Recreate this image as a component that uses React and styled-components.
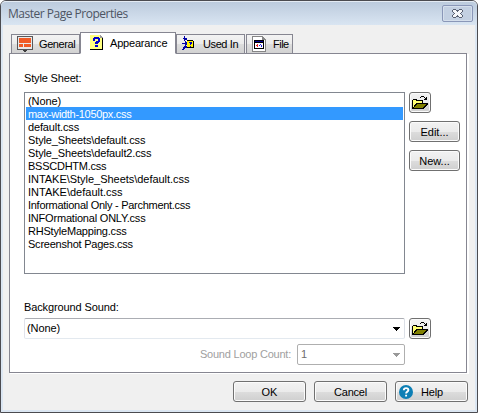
import React from 'react';
import styled, { createGlobalStyle } from 'styled-components';

const Global = createGlobalStyle`
  *{box-sizing:border-box}
  body{margin:0;background:#fff;overflow:hidden}
`;

const Window = styled.main`
  width:478px;height:413px;display:flex;flex-direction:column;
  border:1px solid #4b4b50;border-radius:6px 6px 0 0;
  background:#dbe6f2;padding:0 2px 2px 2px;
  font:11px "Liberation Sans",Arial,sans-serif;color:#000;white-space:nowrap;
`;
const TitleBar = styled.header`
  height:24px;flex:none;margin:0 -2px;padding:3px 4px 0 7px;display:flex;justify-content:space-between;
  border-radius:5px 5px 0 0;border-top:1px solid #e4ebf3;
  background:linear-gradient(#bccbdd,#d9e5f2);
`;
const Title = styled.h1`
  margin:1px 0 0;font:12px/16px "Open Sans","Segoe UI",sans-serif;color:#4d5563;
  letter-spacing:${p => p.$ls}px;
`;
const Close = styled.button`
  width:31px;height:17px;padding:0;display:grid;place-items:center;border:1px solid #8a97b8;border-radius:2px;
  background:#c3d0e2;box-shadow:inset 0 0 0 1px #d5dfec;
`;
const Body = styled.div`
  flex:1;background:#f0f0f0;padding:7px 5px 0 6px;display:flex;flex-direction:column;
`;
const Tabs = styled.nav`display:flex;align-items:flex-end;height:22px;padding-left:2px;flex:none;margin-bottom:-1px;z-index:1;`;
const Tab = styled.div`
  display:flex;align-items:center;width:${p => p.$w}px;height:${p => (p.$active ? 22 : 20)}px;
  padding:0 0 ${p => (p.$active ? 2 : 1)}px ${p => p.$pl}px;gap:${p => p.$gap}px;margin-right:${p => p.$mr || 0}px;
  border:1px solid #868691;border-bottom-color:${p => (p.$active ? '#fff' : '#868691')};
  background:${p => (p.$active ? '#fff' : 'linear-gradient(#f3f3f3 0,#ebebeb 50%,#dddddd 51%,#d2d2d2)')};
`;
const Text = styled.span`letter-spacing:${p => p.$ls || 0}px;line-height:13px;`;
const Caption = styled(Text)`padding-top:2px;`;
const Panel = styled.section`
  width:458px;height:320px;border:1px solid #868691;background:#fff;box-shadow:1px 1px 0 #fff,2px 1px 0 #fff;
  padding:18px 5px 0 14px;display:flex;flex-direction:column;flex:none;
`;
const Label = styled.label`
  height:13px;line-height:13px;margin-top:${p => p.$mt || 0}px;
  letter-spacing:${p => p.$ls || 0}px;color:${p => (p.$off ? '#a0a0a0' : '#000')};
`;
const Line = styled.div`
  display:flex;gap:${p => (p.$end ? 6 : 4)}px;margin-top:${p => p.$mt}px;padding-right:${p => p.$pr || 0}px;
  justify-content:${p => (p.$end ? 'flex-end' : 'flex-start')};align-items:${p => (p.$end ? 'center' : 'flex-start')};
`;
const List = styled.ul`
  margin:0;padding:1px;list-style:none;width:381px;height:182px;border:1px solid #828790;background:#fff;
`;
const Item = styled.li`
  height:13px;line-height:15px;padding-left:2px;letter-spacing:${p => p.$ls}px;
  color:${p => (p.$on ? '#fff' : '#000')};background:${p => (p.$on ? '#3399ff' : 'transparent')};
`;
const Side = styled.div`display:flex;flex-direction:column;gap:8px;`;
const Button = styled.button`
  width:${p => p.$w}px;height:21px;display:flex;align-items:center;gap:8px;
  justify-content:${p => (p.$start ? 'flex-start' : 'center')};padding:0 0 0 ${p => (p.$start ? 3 : 0)}px;
  border:1px solid #707070;border-radius:3px;box-shadow:inset 0 0 0 1px #fbfbfb;
  background:linear-gradient(#f2f2f2 0,#ebebeb 50%,#dddddd 51%,#cfcfcf);
  font:11px "Liberation Sans",Arial,sans-serif;color:#000;
`;
const Combo = styled.div`
  width:${p => p.$w}px;height:21px;display:flex;align-items:center;justify-content:space-between;
  padding:0 4px 0 ${p => (p.$off ? 3 : 2)}px;background:#fff;border-radius:2px;border:1px solid;
  border-color:${p => (p.$off ? '#afafaf' : '#abadb3 #dbdfe6 #e3e9ef #e2e3ea')};color:${p => (p.$off ? '#6d6d6d' : '#000')};
`;
const Footer = styled.footer`display:flex;justify-content:flex-end;gap:8px;margin-top:8px;padding-right:2px;`;

const Arrow = ({ off }) => (
  <svg width="7" height="4" shapeRendering="crispEdges"><path d="M0 0h7v1H0zM1 1h5v1H1zM2 2h3v1H2zM3 3h1v1H3z" fill={off ? '#999' : '#000'} /></svg>
);
const Folder = () => (
  <svg width="16" height="14" shapeRendering="crispEdges">
    <path d="M9 0h3v1H9zM8 1h1v1H8zM12 1h1v1h1V1h1v3h-3V3h1V2h-1z" fill="#000" />
    <path d="M0 4h1V3h4v1h6v3h5v1l-4 5H0z" fill="#000" />
    <path d="M1 4h3v1h6v2H4v1H3v1H2v2H1z" fill="#ffff73" />
    <path d="M5 8h9v1h-1v1h-1v1h-1v1H2v-1h1v-1h1V9h1z" fill="#808000" />
  </svg>
);
const Monitor = () => (
  <svg width="16" height="16" shapeRendering="crispEdges">
    <path d="M0 0h16v14H0z" fill="#58585a" /><path d="M1 1h14v12H1z" fill="#e9e9e9" />
    <path d="M2 2h12v5H2zM2 8h4v3H2zM7 8h7v3H7z" fill="#f15a24" /><path d="M6 14h4v1H6zM7 15h2v1H7z" fill="#3f3f3f" />
  </svg>
);
const Question = () => (
  <svg width="13" height="15" shapeRendering="crispEdges">
    <path d="M0 0h10v1h1v1h1v1h1v12H0z" fill="#000" /><path d="M0 0h10v3h2v11H0z" fill="#ffff80" />
    <path d="M10 0h1v1h1v1h1v1h-3z" fill="#999" />
    <path d="M4 2h5v1h1v4H9v1H8v1H5V7h1V6h2V4H5v2H3V3h1zM5 10h3v2H5z" fill="#00c" />
  </svg>
);
const UsedIn = () => (
  <svg width="13" height="15" shapeRendering="crispEdges">
    <path d="M5 4h6v1h1v7H5z" fill="#000" /><path d="M5 5h6v6H5z" fill="#fff200" />
    <path d="M2 0h1v2h2v2H3v1H2V3H1V2h1zM0 7h3V5h1v1h1v3H4v1H3V8H0zM0 14v-1h1v-2h1v-1h3v2H3v1H2v1z" fill="#0000a8" />
    <path d="M7 6h3v2H9v1H8V7H7zM8 10h1v1H8z" fill="#00c" />
  </svg>
);
const FileIcon = () => (
  <svg width="14" height="16" shapeRendering="crispEdges">
    <path d="M0 0h10l4 4v12H0z" fill="#858585" /><path d="M1 1h9v3h3v11H1z" fill="#fff" />
    <path d="M2 4h10v9H2z" fill="#000" /><path d="M3 5h8v1H3z" fill="#000090" /><path d="M3 7h8v5H3z" fill="#fff" />
    <path d="M4 9h1v1H4zM5 8h1v3H5z" fill="#e22" /><path d="M7 9h1v1H7zM8 8h1v1H8zM9 9h1v2H9z" fill="#22d" />
  </svg>
);
const CloseX = () => (
  <svg width="11" height="9" shapeRendering="crispEdges">
    <path d="M1 0h3v1h3V0h3v1h1v2h-1v1H9v1h1v1h1v2h-1v1H7V8H4v1H1V8H0V6h1V5h1V4H1V3H0V1h1z" fill="#596173" />
    <path d="M1 1h3v1h1v1h1V2h1V1h3v2H9v1H8v1h1v1h1v2H7V7H6V6H5v1H4v1H1V6h1V5h1V4H2V3H1z" fill="#f4f6fa" />
  </svg>
);
const HelpIcon = () => (
  <svg width="14" height="14"><circle cx="7" cy="7" r="7" fill="#0d7fb5" /><path d="M4.800 5.300c0-3 4.600-2.800 4.600-.2C9.400 6.700 7.100 6.600 7.100 8.600M7.100 9.700v1.800" fill="none" stroke="#fff" strokeWidth="1.900" /></svg>
);

const files = [
  ['(None)', -0.1], ['max-width-1050px.css', -0.3], ['default.css', -0.14], ['Style_Sheets\\default.css', -0.13],
  ['Style_Sheets\\default2.css', -0.13], ['BSSCDHTM.css', -0.25], ['INTAKE\\Style_Sheets\\default.css', -0.03],
  ['INTAKE\\default.css', 0], ['Informational Only - Parchment.css', -0.28], ['INFOrmational ONLY.css', -0.2],
  ['RHStyleMapping.css', -0.2], ['Screenshot Pages.css', -0.23],
];

export default function App() {
  return (
    <>
      <Global />
      <Window>
        <TitleBar><Title $ls={-0.49}>Master Page Properties</Title><Close aria-label="Close"><CloseX /></Close></TitleBar>
        <Body>
          <Tabs>
            <Tab $w={69} $pl={5} $gap={6}><Monitor /><Caption $ls={-0.4}>General</Caption></Tab>
            <Tab $w={96} $pl={9} $gap={7} $active><Question /><Caption $ls={-0.2}>Appearance</Caption></Tab>
            <Tab $w={69} $pl={5} $gap={8} $mr={1}><UsedIn /><Caption $ls={-0.4}>Used In</Caption></Tab>
            <Tab $w={47} $pl={5} $gap={7}><FileIcon /><Caption $ls={-0.5}>File</Caption></Tab>
          </Tabs>
          <Panel>
            <Label $ls={-0.16}>Style Sheet:</Label>
            <Line $mt={7}>
              <List>{files.map(([f, ls], i) => <Item key={f} $ls={ls} $on={i === 1}>{f}</Item>)}</List>
              <Side>
                <Button $w={22} aria-label="Browse"><Folder /></Button>
                <Button $w={51}><Caption>Edit...</Caption></Button>
                <Button $w={51}><Caption>New...</Caption></Button>
              </Side>
            </Line>
            <Label $mt={27} $ls={-0.12}>Background Sound:</Label>
            <Line $mt={4}>
              <Combo $w={381}><Text $ls={-0.1}>(None)</Text><Arrow /></Combo>
              <Button $w={22} aria-label="Browse"><Folder /></Button>
            </Line>
            <Line $mt={5} $end $pr={56}><Label $off $ls={-0.22}>Sound Loop Count:</Label><Combo $w={108} $off><Text>1</Text><Arrow off /></Combo></Line>
          </Panel>
          <Footer>
            <Button $w={73}><Caption>OK</Caption></Button>
            <Button $w={73}><Caption $ls={-0.2}>Cancel</Caption></Button>
            <Button $w={73} $start><HelpIcon /><Caption $ls={-0.2}>Help</Caption></Button>
          </Footer>
        </Body>
      </Window>
    </>
  );
}
